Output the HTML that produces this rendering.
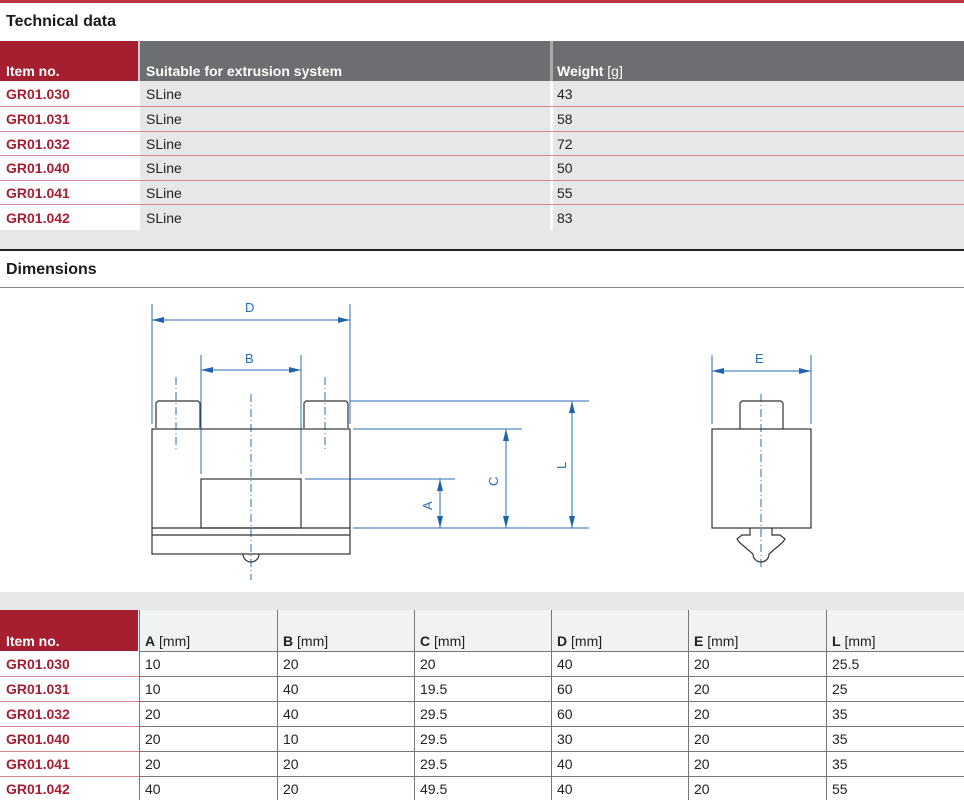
<!DOCTYPE html>
<html><head><meta charset="utf-8"><style>
*{margin:0;padding:0;box-sizing:border-box}
body{width:964px;height:800px;overflow:hidden;background:#fff;font-family:"Liberation Sans",sans-serif;position:relative;color:#222}
.a{position:absolute}
.t{font-size:14px;white-space:nowrap}
.red{color:#a61e32;font-weight:bold}
.h{font-weight:bold;font-size:16px;color:#1a1a1a}
</style></head><body>
<div class="a" style="left:0;top:0;width:964px;height:3px;background:#b8323f"></div>
<div class="a h" style="left:6px;top:13px">Technical data</div>
<!-- top header -->
<div class="a" style="left:0;top:41px;width:138px;height:40px;background:#a51f30"></div>
<div class="a" style="left:140px;top:41px;width:410px;height:40px;background:#6d6e71"></div>
<div class="a" style="left:553px;top:41px;width:411px;height:40px;background:#6d6e71"></div>
<div class="a" style="left:138px;top:41px;width:2px;height:40px;background:#ccc"></div>
<div class="a" style="left:550px;top:41px;width:3px;height:40px;background:#aaa"></div>
<div class="a t" style="left:6px;top:63px;color:#fff;font-weight:bold">Item no.</div>
<div class="a t" style="left:146px;top:63px;color:#fff;font-weight:bold">Suitable for extrusion system</div>
<div class="a t" style="left:557px;top:63px;color:#fff"><b>Weight</b> [g]</div>
<div class="a" style="left:140px;top:81px;width:824px;height:149px;background:#e6e7e8"></div>
<div class="a" style="left:550px;top:81px;width:3px;height:149px;background:#fff"></div>
<div class="a" style="left:0;top:230px;width:964px;height:19px;background:#e6e7e8"></div>
<div class="a" style="left:0;top:249px;width:964px;height:2px;background:#222"></div>
<div class="a" style="left:0;top:106px;width:964px;height:1px;background:#d9838c"></div>
<div class="a" style="left:0;top:131px;width:964px;height:1px;background:#d9838c"></div>
<div class="a" style="left:0;top:155px;width:964px;height:1px;background:#d9838c"></div>
<div class="a" style="left:0;top:180px;width:964px;height:1px;background:#d9838c"></div>
<div class="a" style="left:0;top:204px;width:964px;height:1px;background:#d9838c"></div>
<div class="a t red" style="left:6px;top:86px">GR01.030</div><div class="a t" style="left:146px;top:86px">SLine</div><div class="a t" style="left:557px;top:86px">43</div>
<div class="a t red" style="left:6px;top:111px">GR01.031</div><div class="a t" style="left:146px;top:111px">SLine</div><div class="a t" style="left:557px;top:111px">58</div>
<div class="a t red" style="left:6px;top:136px">GR01.032</div><div class="a t" style="left:146px;top:136px">SLine</div><div class="a t" style="left:557px;top:136px">72</div>
<div class="a t red" style="left:6px;top:160px">GR01.040</div><div class="a t" style="left:146px;top:160px">SLine</div><div class="a t" style="left:557px;top:160px">50</div>
<div class="a t red" style="left:6px;top:185px">GR01.041</div><div class="a t" style="left:146px;top:185px">SLine</div><div class="a t" style="left:557px;top:185px">55</div>
<div class="a t red" style="left:6px;top:210px">GR01.042</div><div class="a t" style="left:146px;top:210px">SLine</div><div class="a t" style="left:557px;top:210px">83</div>

<div class="a h" style="left:6px;top:261px">Dimensions</div>
<div class="a" style="left:0;top:287px;width:964px;height:1px;background:#888"></div>

<svg class="a" style="left:0;top:0" width="964" height="800" viewBox="0 0 964 800">
<g stroke="#2a6cb5" stroke-width="1" fill="none">
<line x1="152" y1="304" x2="152" y2="424"/><line x1="350" y1="304" x2="350" y2="424"/>
<line x1="152" y1="320" x2="350" y2="320"/>
<line x1="201" y1="355" x2="201" y2="474"/><line x1="301" y1="355" x2="301" y2="474"/>
<line x1="201" y1="370" x2="301" y2="370"/>
<line x1="350" y1="401" x2="589" y2="401"/><line x1="353" y1="429" x2="522" y2="429"/>
<line x1="305" y1="479" x2="455" y2="479"/><line x1="353" y1="528" x2="589" y2="528"/>
<line x1="440" y1="479" x2="440" y2="528"/><line x1="506" y1="429" x2="506" y2="528"/><line x1="572" y1="401" x2="572" y2="528"/>
<line x1="712" y1="355" x2="712" y2="424"/><line x1="811" y1="355" x2="811" y2="424"/>
<line x1="712" y1="371" x2="811" y2="371"/>
<g stroke-dasharray="8,3,1,3"><line x1="251" y1="394" x2="251" y2="580"/><line x1="176" y1="377" x2="176" y2="450"/><line x1="325" y1="377" x2="325" y2="450"/><line x1="761" y1="394" x2="761" y2="570"/></g>
</g>
<g fill="#1f62b0">
<path d="M152 320l12-3v6z"/><path d="M350 320l-12-3v6z"/>
<path d="M201 370l12-3v6z"/><path d="M301 370l-12-3v6z"/>
<path d="M712 371l12-3v6z"/><path d="M811 371l-12-3v6z"/>
<path d="M440 479l-3 12h6z"/><path d="M440 528l-3-12h6z"/>
<path d="M506 429l-3 12h6z"/><path d="M506 528l-3-12h6z"/>
<path d="M572 401l-3 12h6z"/><path d="M572 528l-3-12h6z"/>
</g>
<g fill="#2a6cb5" font-family="Liberation Sans,sans-serif" font-size="13">
<text x="245" y="312">D</text><text x="245" y="363">B</text><text x="755" y="363">E</text>
<text transform="translate(432,510) rotate(-90)">A</text>
<text transform="translate(498,486) rotate(-90)">C</text>
<text transform="translate(566,469) rotate(-90)">L</text>
</g>
<g stroke="#333" stroke-width="1.2" fill="none">
<rect x="152" y="429" width="198" height="125"/>
<line x1="152" y1="528" x2="350" y2="528"/><line x1="152" y1="535" x2="350" y2="535"/>
<rect x="201" y="479" width="100" height="49"/>
<path d="M156 428v-25l2-2h40l2 2v25"/><path d="M304 428v-25l2-2h40l2 2v25"/>
<path d="M243 554a8 8 0 0 0 16 0"/>
<rect x="712" y="429" width="99" height="99"/>
<path d="M740 429v-26l2-2h39l2 2v26"/>
<path d="M750 528v7h-8l-5 4 2 3 14 12a8 8 0 0 0 16 0l14-12 2-3-5-4h-8v-7"/>
</g>
</svg>

<div class="a" style="left:0;top:592px;width:964px;height:18px;background:#e6e7e8"></div>
<div class="a" style="left:0;top:610px;width:138px;height:41px;background:#a51f30"></div>
<div class="a" style="left:140px;top:610px;width:824px;height:41px;background:#f1f2f2"></div>
<div class="a" style="left:140px;top:651px;width:824px;height:1px;background:#777"></div>
<div class="a" style="left:140px;top:676px;width:824px;height:1px;background:#777"></div>
<div class="a" style="left:140px;top:701px;width:824px;height:1px;background:#777"></div>
<div class="a" style="left:140px;top:726px;width:824px;height:1px;background:#777"></div>
<div class="a" style="left:140px;top:751px;width:824px;height:1px;background:#777"></div>
<div class="a" style="left:140px;top:776px;width:824px;height:1px;background:#777"></div>
<div class="a" style="left:0;top:676px;width:140px;height:1px;background:#d9838c"></div>
<div class="a" style="left:0;top:701px;width:140px;height:1px;background:#d9838c"></div>
<div class="a" style="left:0;top:726px;width:140px;height:1px;background:#d9838c"></div>
<div class="a" style="left:0;top:751px;width:140px;height:1px;background:#d9838c"></div>
<div class="a" style="left:0;top:776px;width:140px;height:1px;background:#d9838c"></div>
<div class="a" style="left:139px;top:610px;width:1px;height:190px;background:#777"></div>
<div class="a" style="left:277px;top:610px;width:1px;height:190px;background:#777"></div>
<div class="a" style="left:414px;top:610px;width:1px;height:190px;background:#777"></div>
<div class="a" style="left:551px;top:610px;width:1px;height:190px;background:#777"></div>
<div class="a" style="left:688px;top:610px;width:1px;height:190px;background:#777"></div>
<div class="a" style="left:826px;top:610px;width:1px;height:190px;background:#777"></div>
<div class="a t" style="left:6px;top:633px;color:#fff;font-weight:bold">Item no.</div>
<div class="a t" style="left:145px;top:633px"><b>A</b> [mm]</div>
<div class="a t" style="left:283px;top:633px"><b>B</b> [mm]</div>
<div class="a t" style="left:420px;top:633px"><b>C</b> [mm]</div>
<div class="a t" style="left:557px;top:633px"><b>D</b> [mm]</div>
<div class="a t" style="left:694px;top:633px"><b>E</b> [mm]</div>
<div class="a t" style="left:832px;top:633px"><b>L</b> [mm]</div>

<div class="a t red" style="left:6px;top:656px">GR01.030</div><div class="a t" style="left:145px;top:656px">10</div><div class="a t" style="left:283px;top:656px">20</div><div class="a t" style="left:420px;top:656px">20</div><div class="a t" style="left:557px;top:656px">40</div><div class="a t" style="left:694px;top:656px">20</div><div class="a t" style="left:832px;top:656px">25.5</div>
<div class="a t red" style="left:6px;top:681px">GR01.031</div><div class="a t" style="left:145px;top:681px">10</div><div class="a t" style="left:283px;top:681px">40</div><div class="a t" style="left:420px;top:681px">19.5</div><div class="a t" style="left:557px;top:681px">60</div><div class="a t" style="left:694px;top:681px">20</div><div class="a t" style="left:832px;top:681px">25</div>
<div class="a t red" style="left:6px;top:706px">GR01.032</div><div class="a t" style="left:145px;top:706px">20</div><div class="a t" style="left:283px;top:706px">40</div><div class="a t" style="left:420px;top:706px">29.5</div><div class="a t" style="left:557px;top:706px">60</div><div class="a t" style="left:694px;top:706px">20</div><div class="a t" style="left:832px;top:706px">35</div>
<div class="a t red" style="left:6px;top:731px">GR01.040</div><div class="a t" style="left:145px;top:731px">20</div><div class="a t" style="left:283px;top:731px">10</div><div class="a t" style="left:420px;top:731px">29.5</div><div class="a t" style="left:557px;top:731px">30</div><div class="a t" style="left:694px;top:731px">20</div><div class="a t" style="left:832px;top:731px">35</div>
<div class="a t red" style="left:6px;top:756px">GR01.041</div><div class="a t" style="left:145px;top:756px">20</div><div class="a t" style="left:283px;top:756px">20</div><div class="a t" style="left:420px;top:756px">29.5</div><div class="a t" style="left:557px;top:756px">40</div><div class="a t" style="left:694px;top:756px">20</div><div class="a t" style="left:832px;top:756px">35</div>
<div class="a t red" style="left:6px;top:781px">GR01.042</div><div class="a t" style="left:145px;top:781px">40</div><div class="a t" style="left:283px;top:781px">20</div><div class="a t" style="left:420px;top:781px">49.5</div><div class="a t" style="left:557px;top:781px">40</div><div class="a t" style="left:694px;top:781px">20</div><div class="a t" style="left:832px;top:781px">55</div>
</body></html>
